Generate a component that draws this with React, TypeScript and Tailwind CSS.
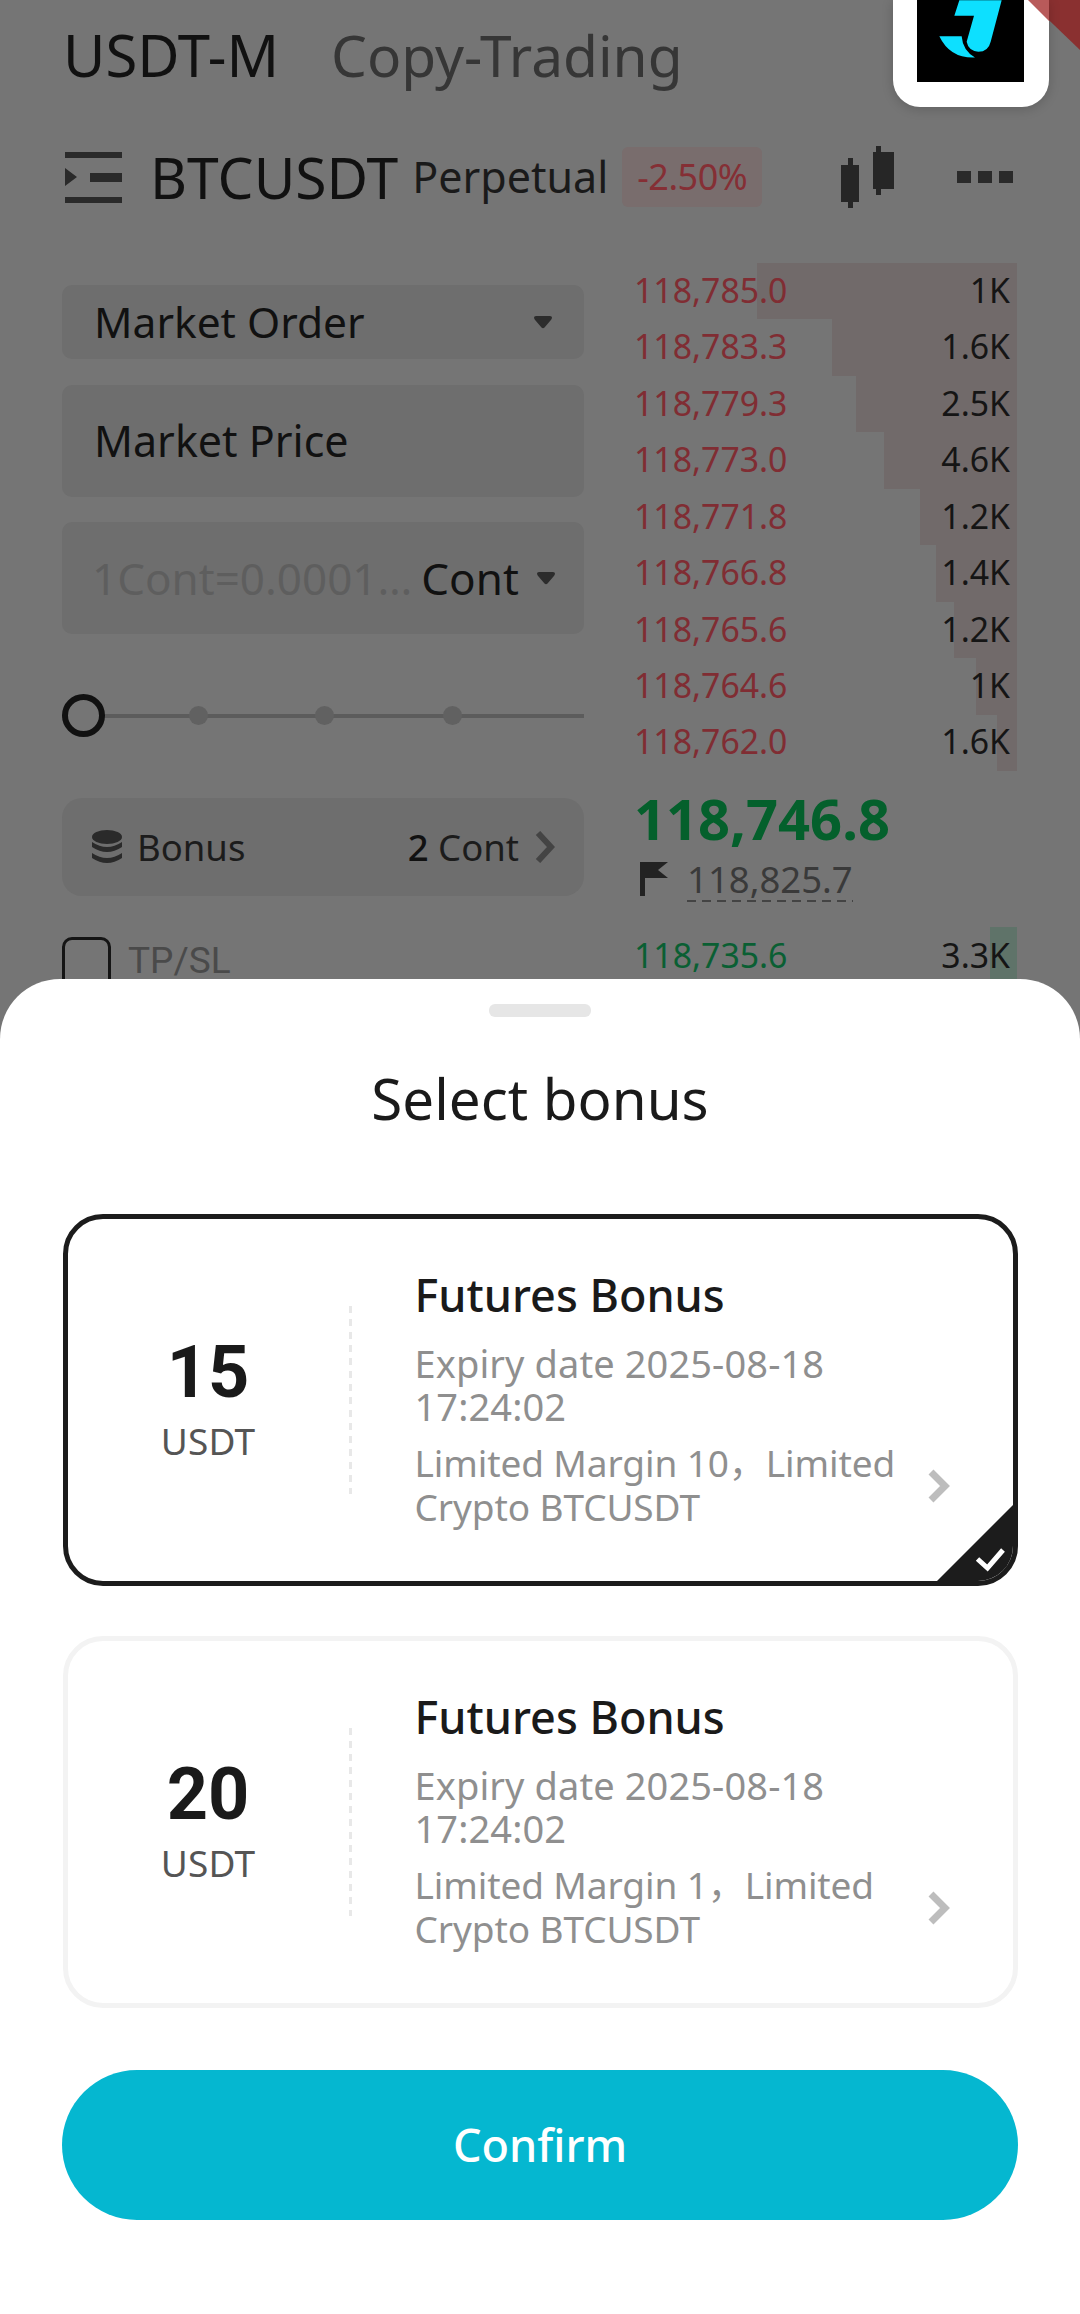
const asks = [
  { price: "118,785.0", qty: "1K", bar: 260 },
  { price: "118,783.3", qty: "1.6K", bar: 185 },
  { price: "118,779.3", qty: "2.5K", bar: 161 },
  { price: "118,773.0", qty: "4.6K", bar: 133 },
  { price: "118,771.8", qty: "1.2K", bar: 97 },
  { price: "118,766.8", qty: "1.4K", bar: 81 },
  { price: "118,765.6", qty: "1.2K", bar: 63 },
  { price: "118,764.6", qty: "1K", bar: 41 },
  { price: "118,762.0", qty: "1.6K", bar: 20 },
];

const bonuses = [
  { amount: "15", margin: "Limited Margin 10，Limited", active: true },
  { amount: "20", margin: "Limited Margin 1，Limited", active: false },
];

function Caret() {
  return (
    <svg width="18" height="13" viewBox="0 0 18 13" className="shrink-0">
      <path d="M0 1.5Q0 0 2 0H16Q18 0 18 1.5Q18 3 16.5 4.5L10.5 11.5Q9 13 7.5 11.5L1.5 4.5Q0 3 0 1.5Z" fill="#2c2c2c" />
    </svg>
  );
}

function BonusCard({ amount, margin, active }: { amount: string; margin: string; active: boolean }) {
  return (
    <div
      className={`relative flex h-[372px] w-[955px] overflow-hidden rounded-[40px] border-[5px] bg-white ${
        active ? "border-[#1c1c1c]" : "border-[#f3f3f3]"
      }`}
    >
      <div className="flex w-[281px] shrink-0 items-center justify-center">
        <div className="flex w-[200px] flex-col items-center">
          <div className="mt-[-5px] font-['Roboto',sans-serif] text-[72px] leading-[80px] font-bold text-[#1a1a1a]">{amount}</div>
          <div className="mt-[6px] text-[37px] leading-[44px] tracking-[0.2px] text-[#555555]">USDT</div>
        </div>
      </div>
      <div className="mt-[87px] h-[188px] w-[3px] bg-[repeating-linear-gradient(180deg,#e8e8e8_0_7px,transparent_7px_13px)]" />
      <div className="ml-[63px] flex flex-col pt-[48px]">
        <div className="text-[45px] leading-[56px] font-medium text-[#1a1a1a]">Futures Bonus</div>
        <div className="mt-[19px] w-[480px] text-[38px] leading-[43px] tracking-[0.1px] text-[#8f8f8f]">
          Expiry date 2025-08-18 17:24:02
        </div>
        <div className="mt-[13px] text-[37px] leading-[44px] tracking-[-0.1px] whitespace-nowrap text-[#8f8f8f]">
          <div>{margin}</div>
          <div>Crypto BTCUSDT</div>
        </div>
      </div>
      <svg width="24" height="36" viewBox="0 0 24 36" className="absolute top-[249px] left-[859px]">
        <path d="M4 4L18 18L4 32" fill="none" stroke="#bdbdbd" strokeWidth="7" />
      </svg>
      {active && (
        <svg width="86" height="86" viewBox="0 0 86 86" className="absolute right-[-5px] bottom-[-5px]">
          <path d="M86 0V86H0Z" fill="#1c1c1c" />
          <path d="M45.5 59L55.5 68L71 50" fill="none" stroke="#ffffff" strokeWidth="5" />
        </svg>
      )}
    </div>
  );
}

export default function App() {
  return (
    <div className="relative h-[2314px] w-[1080px] overflow-hidden bg-[#757575] font-['Noto_Sans','Noto_Sans_CJK_SC',sans-serif]">
      <div className="flex h-[110px] items-center gap-[52px] pl-[63px]">
        <span className="text-[58px] leading-[60px] text-[#111111]">USDT-M</span>
        <span className="text-[56.8px] leading-[60px] text-[#363636]">Copy-Trading</span>
      </div>

      <div className="mt-[37px] flex h-[60px] items-center pl-[65px]">
        <svg width="58" height="51" viewBox="0 0 58 51" className="shrink-0">
          <path d="M0 0H57V6H0ZM25 21H57V30H25ZM0 45H57V51H0ZM0 16L12 25L0 34Z" fill="#2a2a2a" />
        </svg>
        <span className="ml-[27px] text-[57px] leading-[60px] text-[#111111]">BTCUSDT</span>
        <span className="ml-[14px] text-[43px] leading-[60px] text-[#1a1a1a]">Perpetual</span>
        <span className="ml-[14px] flex h-[60px] w-[140px] items-center justify-center rounded-[6px] bg-[#796d6d] text-[36px] tracking-[-0.5px] text-[#852f35]">
          -2.50%
        </span>
        <svg width="56" height="62" viewBox="0 0 56 62" className="ml-[78px] shrink-0">
          <path d="M8 12H13V19H19V56H13V62H8V56H1V19H8ZM36 0H41V6H54V43H41V49H36V43H33V6H36Z" fill="#262626" />
        </svg>
        <div className="ml-[61px] flex gap-[7px]">
          <div className="h-[12px] w-[14px] bg-[#2a2a2a]" />
          <div className="h-[12px] w-[14px] bg-[#2a2a2a]" />
          <div className="h-[12px] w-[14px] bg-[#2a2a2a]" />
        </div>
      </div>

      <div className="mt-[56px] flex pl-[62px]">
        <div className="flex w-[522px] flex-col pt-[22px]">
          <div className="flex h-[74px] items-center justify-between rounded-[10px] bg-[#6e6e6e] pr-[32px] pl-[32px] text-[42.5px] text-[#111111]">
            <span>Market Order</span>
            <Caret />
          </div>
          <div className="mt-[26px] flex h-[112px] items-center rounded-[10px] bg-[#6e6e6e] pl-[32px] text-[43px] text-[#111111]">
            Market Price
          </div>
          <div className="mt-[25px] flex h-[112px] items-center rounded-[10px] bg-[#6e6e6e] pr-[29px] pl-[30px]">
            <span className="text-[44px] text-[#5e5e5e]">1Cont=0.0001…</span>
            <span className="ml-[9px] text-[44px] text-[#111111]">Cont</span>
            <span className="ml-auto"><Caret /></span>
          </div>
          <div className="relative mt-[60px] flex h-[43px] items-center">
            <div className="h-[4px] w-full bg-[#5c5c5c]" />
            <div className="absolute top-[12px] left-[127px] h-[19px] w-[19px] rounded-full bg-[#616161]" />
            <div className="absolute top-[12px] left-[253px] h-[19px] w-[19px] rounded-full bg-[#616161]" />
            <div className="absolute top-[12px] left-[381px] h-[19px] w-[19px] rounded-full bg-[#616161]" />
            <div className="absolute top-0 left-0 h-[43px] w-[43px] rounded-full border-[6px] border-[#111111] bg-[#757575]" />
          </div>
          <div className="mt-[61px] flex h-[98px] items-center rounded-[20px] bg-[#6e6e6e] pr-[29px] pl-[30px] text-[36.5px] text-[#1c1c1c]">
            <svg width="30" height="35" viewBox="0 0 30 35" className="shrink-0">
              <ellipse cx="15" cy="7" rx="15" ry="7" fill="#2a2a2a" />
              <path d="M0 12Q15 22 30 12V17Q15 27 0 17ZM0 23Q15 33 30 23V28Q15 38 0 28Z" fill="#2a2a2a" />
            </svg>
            <span className="ml-[15px]">Bonus</span>
            <span className="ml-auto"><span className="font-medium text-[#111111]">2</span> Cont</span>
            <svg width="20" height="32" viewBox="0 0 20 32" className="ml-[16px] shrink-0">
              <path d="M3 2L16 16L3 30" fill="none" stroke="#444444" strokeWidth="6" />
            </svg>
          </div>
          <div className="mt-[41px] flex items-start">
            <div className="h-[60px] w-[49px] shrink-0 rounded-[10px] border-[3px] border-[#151515]" />
            <span className="mt-[2px] ml-[17px] font-['Roboto',sans-serif] text-[37px] leading-[44px] text-[#4a4a4a]">TP/SL</span>
          </div>
        </div>

        <div className="ml-[51px] flex w-[382px] flex-col text-[33.8px]">
          {asks.map((a) => (
            <div key={a.price} className="relative flex h-[56.45px] items-center justify-between pr-[7px] pb-[2px]">
              <div className="absolute top-0 right-0 h-full bg-[#716a6a]" style={{ width: a.bar }} />
              <span className="relative ml-[-1px] text-[#802d33]">{a.price}</span>
              <span className="relative text-[#151515]">{a.qty}</span>
            </div>
          ))}
          <div className="mt-[16px] ml-[-1px] text-[56px] leading-[62px] font-bold text-[#04602c]">118,746.8</div>
          <div className="mt-[9px] flex items-start">
            <svg width="28" height="34" viewBox="0 0 28 34" className="mt-[4px] ml-[5px] shrink-0">
              <path d="M0 0H28L18 8L28 16H5V34H0Z" fill="#222222" />
            </svg>
            <div className="ml-[19px] flex flex-col">
              <span className="text-[36.5px] leading-[42px] text-[#3a3a3a]">118,825.7</span>
              <div className="h-[2px] w-[166px] bg-[repeating-linear-gradient(90deg,#444444_0_9px,transparent_9px_15px)]" />
            </div>
          </div>
          <div className="relative mt-[25px] flex h-[56px] items-center justify-between pr-[7px]">
            <div className="absolute top-0 right-0 h-full w-[27px] bg-[#5f7369]" />
            <span className="relative ml-[-1px] text-[#0a5f33]">118,735.6</span>
            <span className="relative text-[#151515]">3.3K</span>
          </div>
        </div>
      </div>

      {/* corner ribbon and floating logo */}
      <svg width="52" height="50" viewBox="0 0 52 50" className="absolute top-0 right-0">
        <path d="M0 0H52V50Z" fill="#8a3030" />
      </svg>
      <div className="absolute top-0 left-[893px] h-[107px] w-[156px] overflow-hidden rounded-b-[27px] bg-white shadow-[0_2px_12px_rgba(0,0,0,0.18)]">
        <div className="absolute top-0 left-[24px] h-[82px] w-[107px] bg-black">
          <svg width="107" height="82" viewBox="171 0 321 245">
            <path d="M298 0H425L392 125Q385 155 355 155Q325 152 320 125L342 47H283Z" fill="#0de0ff" />
            <path d="M238 108H305Q308 150 345 172Q270 175 238 108Z" fill="#0de0ff" />
          </svg>
        </div>
        <svg width="21" height="21" viewBox="0 0 21 21" className="absolute top-0 right-0">
          <path d="M0 0H21V21Z" fill="#b85a5a" />
        </svg>
      </div>

      {/* bottom sheet */}
      <div className="absolute right-0 bottom-0 left-0 flex h-[1335px] flex-col items-center rounded-t-[60px] bg-white">
        <div className="mt-[25px] h-[13px] w-[102px] rounded-[6px] bg-[#e6e6e6]" />
        <div className="mt-[47px] text-[56.5px] leading-[70px] text-[#1a1a1a]">Select bonus</div>
        <div className="mt-[80px] flex flex-col gap-[50px]">
          {bonuses.map((b) => (
            <BonusCard key={b.amount} {...b} />
          ))}
        </div>
        <button className="mt-[62px] flex h-[150px] w-[956px] items-center justify-center rounded-full bg-[#05b7d0] text-[45px] font-medium text-white">
          Confirm
        </button>
      </div>
    </div>
  );
}
